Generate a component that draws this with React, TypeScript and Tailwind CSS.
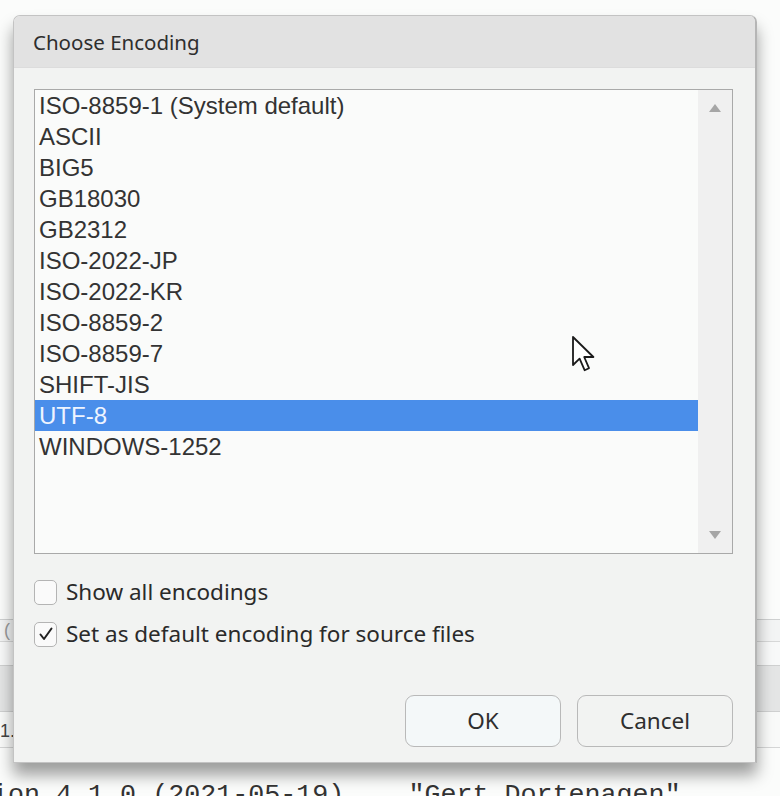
import React from "react";

const items = [
  "ISO-8859-1 (System default)",
  "ASCII",
  "BIG5",
  "GB18030",
  "GB2312",
  "ISO-2022-JP",
  "ISO-2022-KR",
  "ISO-8859-2",
  "ISO-8859-7",
  "SHIFT-JIS",
  "UTF-8",
  "WINDOWS-1252",
];

const ui = { fontFamily: '"Noto Sans", "Open Sans", sans-serif' };
const arial = { fontFamily: '"Liberation Sans", Arial, sans-serif' };

function Checkbox({ checked, label }: { checked: boolean; label: string }) {
  return (
    <div className="flex items-center gap-[9px] h-[26px]">
      <div className="w-[23px] h-[25px] rounded-[5px] border border-[#b4b4b4] bg-[#fafafa] flex items-center justify-center">
        {checked && (
          <svg width="16" height="16" viewBox="0 0 16 16">
            <path d="M2.5 8.5 L6 13 L13.5 2.5" fill="none" stroke="#222" strokeWidth="2" strokeLinecap="round" strokeLinejoin="round" />
          </svg>
        )}
      </div>
      <span className="text-[22.5px] text-[#2a2a2a] leading-none" style={ui}>
        {label}
      </span>
    </div>
  );
}

export default function App() {
  return (
    <div className="relative w-[780px] h-[796px] overflow-hidden bg-[#fbfcfb]">
      {/* background content */}
      <div className="flex flex-col">
        <div className="h-[619px]" />
        <div className="h-[22px] border-t border-[#cfd1d1] bg-[#f3f4f4] flex items-center pl-[4px]">
          <span className="text-[18px] text-[#9a9a9a]" style={arial}>(</span>
        </div>
        <div className="h-[24px] border-t border-[#d7d8d8] bg-[#f8f9f9]" />
        <div className="h-[46px] border-t border-[#cfd0d0] bg-[#e4e5e5]" />
        <div className="h-[36px] border-t border-[#cfd0d0] bg-[#f9faf9] flex items-end pb-[2px]">
          <span className="text-[18px] text-[#444]" style={arial}>1.</span>
        </div>
        <div className="border-t border-[#d5d6d6]" />
        <div
          className="mt-[32px] ml-[-8px] text-[26.7px] leading-[30px] text-[#333] whitespace-pre"
          style={{ fontFamily: '"Liberation Mono", monospace' }}
        >
          {'ion 4.1.0 (2021-05-19)    "Gert Dortenagen"'}
        </div>
      </div>

      {/* dialog */}
      <div className="absolute left-[13px] top-[15px] w-[744px] h-[748px] flex flex-col rounded-t-[7px] border border-[#c3c3c3] border-r-[2px] border-r-[#b5b5b5] bg-[#f2f3f2] shadow-[0_12px_16px_rgba(0,0,0,0.38)] overflow-hidden">
        <div className="h-[52px] shrink-0 bg-[#e2e2e2] border-b border-[#dcdcdc] flex items-center pl-[19px] pt-[2px]">
          <span className="text-[20.5px] text-[#2e2e2e]" style={ui}>
            Choose Encoding
          </span>
        </div>

        <div className="flex flex-col pl-[20px] pr-[22px] pt-[21px]">
          {/* list box */}
          <div className="h-[465px] border border-[#a9a9a9] bg-[#fafbfa] flex">
            <div className="flex-1 flex flex-col">
              {items.map((it) => {
                const sel = it === "UTF-8";
                return (
                  <div
                    key={it}
                    className={
                      "h-[31px] shrink-0 flex items-center pl-[4px] text-[24px] leading-none " +
                      (sel ? "bg-[#4a8eea] text-[#eef4ff]" : "text-[#333]")
                    }
                    style={arial}
                  >
                    {it}
                  </div>
                );
              })}
            </div>
            <div className="w-[34px] bg-[#f0f0f0] flex flex-col items-center justify-between py-[14px]">
              <svg width="12" height="8" viewBox="0 0 12 8">
                <path d="M6 0 L12 8 L0 8 Z" fill="#a6a6a6" />
              </svg>
              <svg width="12" height="8" viewBox="0 0 12 8">
                <path d="M0 0 L12 0 L6 8 Z" fill="#a6a6a6" />
              </svg>
            </div>
          </div>

          <div className="flex flex-col gap-[16px] mt-[25px]">
            <Checkbox checked={false} label="Show all encodings" />
            <Checkbox checked={true} label="Set as default encoding for source files" />
          </div>

          <div className="flex justify-end gap-[16px] mt-[48px]">
            <button
              className="w-[156px] h-[52px] rounded-[9px] border border-[#b9b9b9] bg-[#f4f8f9] text-[22.5px] text-[#2e2e2e]"
              style={ui}
            >
              OK
            </button>
            <button
              className="w-[156px] h-[52px] rounded-[9px] border border-[#b9b9b9] bg-[#f2f3f2] text-[22.5px] text-[#2e2e2e]"
              style={ui}
            >
              Cancel
            </button>
          </div>
        </div>
      </div>

      {/* mouse cursor */}
      <svg className="absolute left-[571px] top-[335px]" width="26" height="40" viewBox="0 0 13 20">
        <path
          d="M1 1 L1 15 L4.3 11.8 L6.8 17.6 L9 16.6 L6.6 11 L11.2 11 Z"
          fill="#ffffff"
          stroke="#1a1a1a"
          strokeWidth="0.9"
          strokeLinejoin="round"
        />
      </svg>
    </div>
  );
}
